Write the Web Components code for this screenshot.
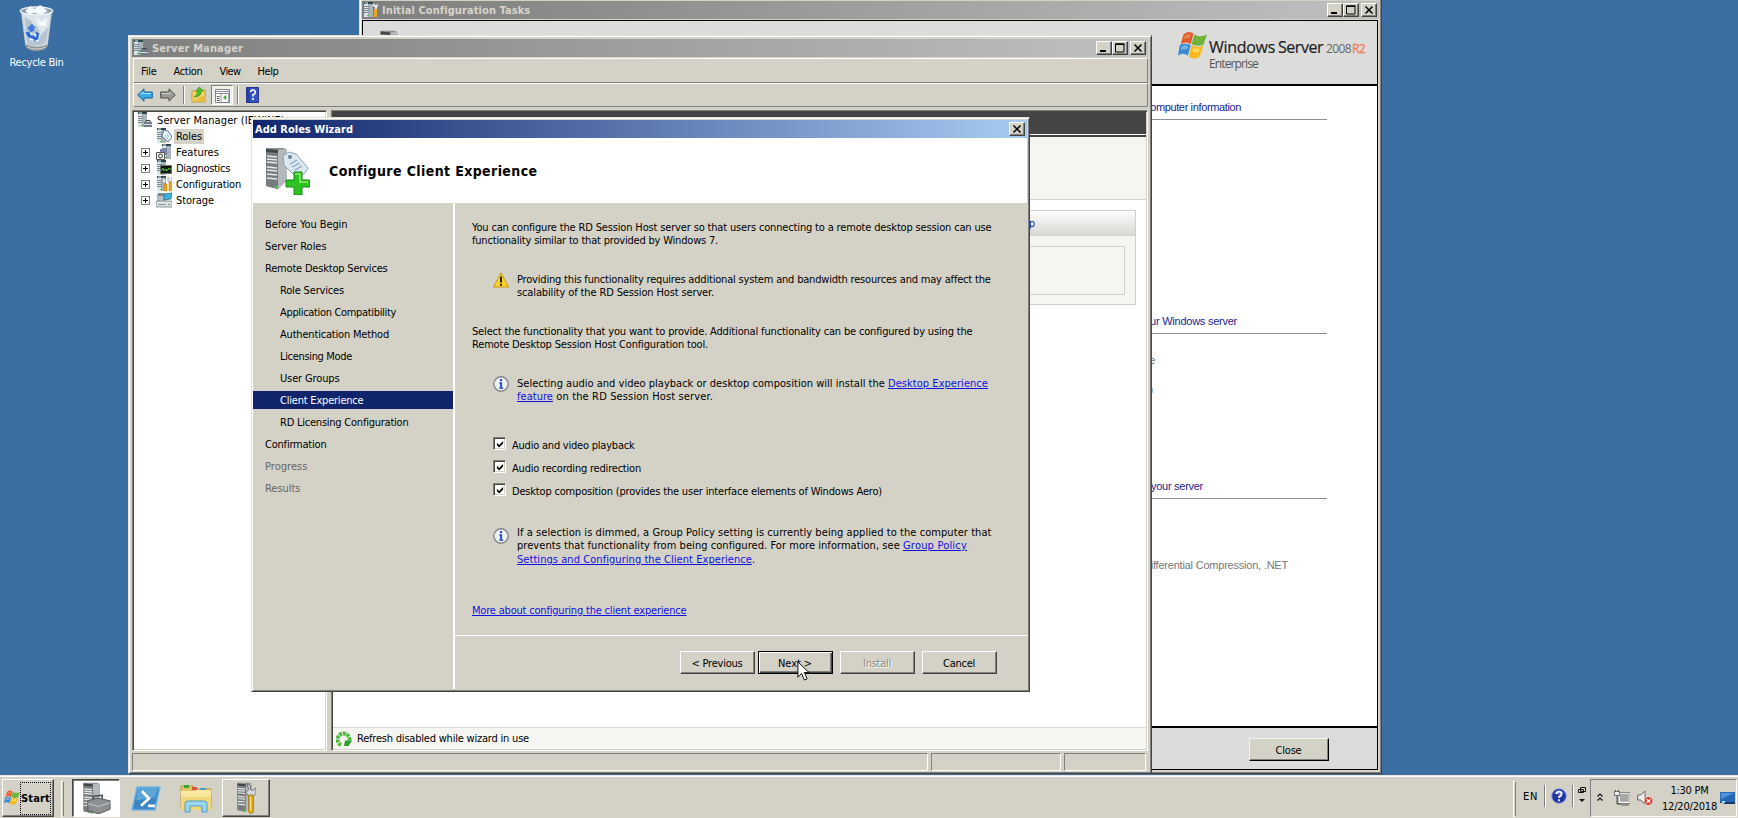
<!DOCTYPE html>
<html lang="en">
<head>
<meta charset="utf-8">
<title>Server Manager</title>
<style>
    html, body { margin: 0; height: 100%; overflow: hidden; }
    body {
        --face: #d4d2c7;
        --dark: #808080;
        --darker: #45453f;
        --navy: #10246b;
        --link: #1010e0;
        font: 11px/13px "DejaVu Sans Condensed", "DejaVu Sans", sans-serif;
        font-stretch: condensed;
        color: #000;
    }
</style>
</head>
<body>
<wd-desktop>
    <wd-shortcut slot="icons" icon="recycle"><wd-fit w="54">Recycle Bin</wd-fit></wd-shortcut>
    <wd-initial-tasks slot="windows"></wd-initial-tasks>
    <wd-server-manager slot="windows"></wd-server-manager>
    <wd-wizard slot="windows"></wd-wizard>
    <wd-taskbar slot="taskbar"></wd-taskbar>
</wd-desktop>

<script>
// ---- icons -------------------------------------------------------------

// small server tower, shared by most of the 16px icons
const tower = `
    <path d="M1 0h9v15H1z" fill="#a9b2ba"/><path d="M1 0h4v15H1z" fill="#d9e2e6"/>
    <path d="M1 0h9v2H1z" fill="#2c4650"/><path d="M2 1h3" stroke="#dff"/>
    <path d="M1 4.5h5M1 6.5h5M1 8.5h5M1 10.5h5" stroke="#7d8b93"/>
    <path d="M4 13h2v1H4z" fill="#3fbf2c"/>`;

const bigTower = `
    <path d="M2 1h18l3 2v30L14 42 2 39z" fill="#8b9093"/>
    <path d="M14 3l9-1v31l-9 9z" fill="#b4b8ba"/>
    <path d="M2 2l12 1v39L2 39z" fill="#777c80"/>
    <path d="M2 2l12 1v3L2 5z" fill="#40474a"/>
    <path d="M3 9l10 1M3 12l10 1M3 15l10 1M3 20l10 1M3 23l10 1M3 27l10 1M3 31l10 1" stroke="#e7eaeb" stroke-width="1.6"/>
    <path d="M11 39h3v2h-3z" fill="#35dc20"/>`;

const flag = `
    <path d="M6 4Q12-1 17 3L14 15Q9 11 3 15z" fill="#e2592b"/>
    <path d="M18 4Q24 8 32 4L28 16Q22 18 15 15z" fill="#70b53b"/>
    <path d="M2 16Q8 13 14 16L11 28Q5 24 0 28z" fill="#3b8ad0"/>
    <path d="M15 16Q21 20 28 17L24 29Q18 34 12 29z" fill="#f6b91d"/>
    <path d="M8 5Q12 2 14 4L13 8Q9 8 6 9z" fill="#f39561" opacity=".7"/>
    <path d="M4 18Q8 15 11 17L10 21Q6 20 3 22z" fill="#8fc9ee" opacity=".7"/>
    <path d="M17 19Q20 21 24 20L23 24Q19 25 16 23z" fill="#ffe77a" opacity=".7"/>`;

const ICONS = {
    recycle: ['0 0 40 48', `
        <path d="M3 6h34l-5 36q-12 6-24 0z" fill="#c3ced6"/>
        <path d="M5 9h30l-4 31q-11 5-22 0z" fill="#dbe4eb"/>
        <path d="M7 12l9 5-5 7 9-3 5 9 8-8-3 17q-10 5-20 1z" fill="#b7c4d1"/>
        <path d="M19 12l6 5 7-4-2 9-8-1zM11 26l5 4 9-1-3 8-9-1z" fill="#f4f8fb"/>
        <path d="M8 40q12 6 24 0v2q-3 5-12 5T8 42z" fill="#8f9596"/><path d="M10 43q10 4 20 0" stroke="#d8d8d2" fill="none"/>
        <ellipse cx="20" cy="6" rx="17.5" ry="4" fill="#8ea0ad" stroke="#eef2f4" stroke-width="1.5"/>
        <path d="M8 6l5-5 5 3 6-4 8 6-7 4-8-2-5 2z" fill="#f6f9fb"/>
        <path d="M10 24l5-5 4 4-2 1 1 2-5 2-1-3z" fill="#3f7ce0"/>
        <path d="M8 28l4-1 2 4 4 0-1 4-6-2zM19 27l4 2-1 6-5 2 0-4 3-1z" fill="#2f66d2"/>`],
    server: ['0 0 16 16', tower + `
        <path d="M7 10h8v5H7z" fill="#6f7d88"/><path d="M9 10V8.5h4V10" stroke="#38444c" fill="none"/><path d="M7 12.5h8" stroke="#d5dee4"/>`],
    tasks: ['0 0 16 16', tower + `
        <path d="M10 1v3l2 1v10h2V5l1-1V1l-1 2h-2z" fill="#efefe9"/><path d="M11 7h3v8h-3z" fill="#eba81b"/>`],
    roles: ['0 0 16 16', tower + `
        <path d="M8 2l4 1 4 6-4 5-6-6z" fill="#edf5fc" stroke="#557ea4"/><path d="M9 7l3 4M11 6l2 3" stroke="#91b0cb"/>`],
    features: ['0 0 16 16', `<g transform="translate(5 0)">${tower}</g>
        <path d="M4 5h7v5H4z" fill="#7c80b5"/><path d="M.5 8.5h8v7h-8z" fill="#f7f7f7" stroke="#555"/><circle cx="4.5" cy="12" r="2" fill="none" stroke="#333"/>`],
    diagnostics: ['0 0 16 16', tower + `
        <path d="M4.500 5.500h11v8h-11z" fill="#101810" stroke="#69716e"/><path d="M5 11l2-3 1 3 2-2 1 2 2-3 2 2" stroke="#55d32c" fill="none"/>`],
    configuration: ['0 0 16 16', tower + `
        <path d="M8 1l2 4-1 3-3-3zM12 1v4l2 1 2-2V1" fill="#e8e8e2" stroke="#77807f" stroke-width=".6"/>
        <path d="M8 8h3v7H8zM13 6h2.500v9H13z" fill="#eda51c" stroke="#ad7205" stroke-width=".5"/>`],
    storage: ['0 0 16 16', `
        <path d="M1 4h9v6H1z" fill="#b7bfc4"/><path d="M2 1h6l2 3H1z" fill="#7d8a92"/>
        <path d="M8 2l8-1-1 6-7 1z" fill="#3bb2df" stroke="#315d71" stroke-width=".7"/>
        <path d="M1 9h14l1 2v4H0v-4z" fill="#dde2e4" stroke="#767d80" stroke-width=".8"/><path d="M2 12.500h8" stroke="#8a9397"/><path d="M12 12h2v1h-2z" fill="#35b32b"/>`],
    back: ['0 0 16 14', `<path d="M.7 7L7 .8V4h8.300v6H7v3.200z" fill="#39aaea" stroke="#1d5f9c"/><path d="M3 6.500L6 4v1.500h8" stroke="#a8e2ff" fill="none"/>`],
    forward: ['0 0 16 14', `<path d="M15.300 7L9 .8V4H.7v6H9v3.200z" fill="#9b9b98" stroke="#4d4d4b"/><path d="M2 5.500h8V4" stroke="#d0d0cd" fill="none"/>`],
    folder: ['0 0 16 16', `<path d="M1 4h6l1-1h7v12H1z" fill="#f3d46b" stroke="#b48a1e" stroke-width=".7"/><path d="M2 14L15 8v6z" fill="#e9bd45"/><path d="M3 10q4-1 4-6H5l4-4 4 4h-2q0 6-8 6z" fill="#47c22a" stroke="#26871a" stroke-width=".6"/>`],
    panes: ['0 0 16 14', `<path d="M.5.500h15v13H.5z" fill="#fff" stroke="#7a7f88"/><path d="M1 2.500h14M1 4.500h14" stroke="#7f8695"/><path d="M2 7.500h3M2 9.500h3M2 11.500h3" stroke="#4b5563"/><path d="M6.500 5v8M14.500 5v8" stroke="#8d93a0"/><path d="M12 6v5L8.500 8.500z" fill="#33a62b"/>`],
    helpBook: ['0 0 14 16', `<path d="M.5.500h13v15H.5z" fill="#3454c4" stroke="#1d318c"/><path d="M1 1h3v14H1z" fill="#2741a5"/><path d="M5 5q0-2 2.500-2T10 5.200 7.500 8v1.500M7.500 11v2" stroke="#fff" stroke-width="1.7" fill="none"/>`],
    warning: ['0 0 16 16', `<path d="M8 .8L15.500 15H.5z" fill="#fad425" stroke="#c99a12" stroke-linejoin="round"/><path d="M8 4.500v6M8 11.800v2" stroke="#222" stroke-width="1.900"/>`],
    info: ['0 0 16 16', `<circle cx="8" cy="8" r="7.200" fill="#eef0f1" stroke="#85888c" stroke-width="1.400"/><path d="M8 3v2.200" stroke="#2856c4" stroke-width="2.200"/><path d="M6.300 7h1.700v5M6 12.200h4.300" stroke="#2856c4" stroke-width="1.300" fill="none"/><path d="M8.200 6.500v6" stroke="#2856c4" stroke-width="1.800"/>`],
    refresh: ['0 0 16 16', `<path d="M5 14A6 6 0 1 1 13 11" fill="none" stroke="#4fb944" stroke-width="4" stroke-dasharray="3 .8"/><path d="M9 9.500h7L12.500 15H8z" fill="#2e9e2c"/>`],
    addRole: ['0 0 46 48', bigTower + `
        <path d="M19 9l6-4 7 2 12 14-3 5-8 5L20 18z" fill="#dce8f0" stroke="#8ba3b6"/>
        <circle cx="26" cy="10" r="2" fill="#6d8193"/><path d="M26 17l7-4M28 20l8-4M31 23l7-4" stroke="#8aa4bd" stroke-width="1.300"/>
        <path d="M30 25h8v8h8v7h-8v8h-8v-8h-8v-7h8z" fill="#2fc321" stroke="#168a12"/><path d="M31 27h5v8h8" stroke="#90ee70" fill="none" stroke-width="1.500"/>`],
    serverBig: ['0 0 30 34', `<g transform="scale(.8)">${bigTower}</g>
        <path d="M6 20l10-3 13 3v9l-12 5-11-4z" fill="#8b8f92" stroke="#55595c"/><path d="M6 23l11 3 12-4" stroke="#c6cacc" fill="none"/>
        <path d="M12 18v-3l9-1v4" stroke="#444b50" stroke-width="1.500" fill="none"/>`],
    toolsBig: ['0 0 22 34', `<g transform="scale(.76)">${bigTower}</g>
        <path d="M12 2l4 2v4l3 1 3-3v6l-4 4h-4l-3-5 3-3z" fill="#d2d6d8" stroke="#62686b"/>
        <path d="M14 14h5v18q-3 3-5 0z" fill="#edb324" stroke="#9d7108"/><path d="M16 16v14" stroke="#ffe389"/>`],
    powershell: ['0 0 30 24', `<path d="M6 1h23L24 23H1z" fill="#3a86c4" stroke="#75b6e2" stroke-width="1.500" stroke-linejoin="round"/><path d="M7 2h20l-3 9L5 14z" fill="#6ab0de" opacity=".7"/><path d="M11 5l7 7-8 7M17 19h7" stroke="#fff" stroke-width="2.600" fill="none"/>`],
    explorer: ['0 0 32 30', `<path d="M1 3h12l2 3h16v20H1z" fill="#e3c46c" stroke="#c29b42"/><path d="M4 2h5v3H4z" fill="#39a832"/><path d="M12 4h5v3h-5z" fill="#d6533c"/><path d="M20 5h6v3h-6z" fill="#4b9bd0"/>
        <path d="M1 8h13l3-1h14v20H1z" fill="#fae69c"/><path d="M1 14h30v13H1z" fill="#f2d67c"/>
        <path d="M5 29v-8q0-3 3-3h16q3 0 3 3v8h-5v-6H10v6z" fill="#9cd7f0" stroke="#4d9cc4"/>`],
    flag: ['0 0 32 32', flag],
    helpRound: ['0 0 16 16', `<circle cx="8" cy="8" r="7.300" fill="#1d36a8" stroke="#8f9cc9"/><path d="M3 5q5-5 10 0-5 3-10 0z" fill="#6e88e0"/><path d="M5.500 6q0-2.500 2.500-2.500T10.500 6 8 8.500V10M8 11.300v2" stroke="#fff" stroke-width="1.700" fill="none"/>`],
    restore: ['0 0 10 18', `<path d="M3.500 1.500h5v4h-5zM1.500 3.500h5v3h-5z" fill="#d4d2c7" stroke="#111"/><path d="M2 13h6l-3 3z" fill="#111"/>`],
    chevrons: ['0 0 6 9', `<path d="M.5 3.500L3 1l2.500 2.500M.5 7.500L3 5l2.500 2.500" stroke="#111" fill="none" stroke-width="1.200"/>`],
    network: ['0 0 16 16', `<path d="M5 3h10.500v9.500H5z" fill="#a6a6a2" stroke="#fff" stroke-width="1.500"/><path d="M4 2.500h12v11H4z" fill="none" stroke="#555" stroke-width=".7"/><path d="M7 15h8" stroke="#555"/><path d="M3 5v9h4" fill="none" stroke="#444"/><path d="M.5 1.500h5v4h-5z" fill="#eee" stroke="#555" stroke-width=".8"/><path d="M1.500 0v2M4.500 0v2" stroke="#555"/>`],
    speaker: ['0 0 16 16', `<path d="M.7 5h3L8 1v13L3.700 10h-3z" fill="#eee" stroke="#666"/><circle cx="11.500" cy="11" r="4.300" fill="#dc3a2c" stroke="#f4dcd6" stroke-width=".7"/><path d="M9.700 9.200l3.600 3.600M13.300 9.200l-3.600 3.600" stroke="#fff" stroke-width="1.400"/>`],
    monitor: ['0 0 15 13', `<path d="M0 0h15v10H0z" fill="#2667b8"/><path d="M1 1h13L1 7z" fill="#4d96dc"/><path d="M0 10h15v2H4l-1-1H0z" fill="#173a6b"/><path d="M2 9h3v2H2z" fill="#9fd8f5"/>`],
    min: ['0 0 12 10', `<path d="M2 7h6v2H2z"/>`],
    max: ['0 0 12 10', `<path d="M1.500 1h8.500v8H1.500z" fill="none" stroke="#000"/><path d="M1 .5h9.500v1.500H1z"/>`],
    close: ['0 0 12 10', `<path d="M2.500 1.500l7 7M9.500 1.500l-7 7" stroke="#000" stroke-width="1.500"/>`],
    pointer: ['0 0 13 22', `<path d="M1 1v16l4-4 3 7 3-1.300L8 12h5z" fill="#fff" stroke="#000" stroke-linejoin="round"/>`],
    check: ['0 0 9 9', `<path d="M1 3v3l2.500 2.500L8 4V1L3.500 5.500z"/>`]
};

customElements.define('wd-icon', class extends HTMLElement {
    constructor() {
        super();
        const shadowRoot = this.attachShadow({mode: 'open'});
        const [box, body] = ICONS[this.getAttribute('name')];
        const w = this.getAttribute('w') || 16;
        const h = this.getAttribute('h') || 16;
        shadowRoot.innerHTML = `
        <style>
            :host { display: block; flex: none; width: ${w}px; height: ${h}px; }
            svg { display: block; width: 100%; height: 100%; }
        </style>
        <svg viewBox="${box}" preserveAspectRatio="none">${body}</svg>`;
    }
});

// ---- basic controls ----------------------------------------------------

customElements.define('wd-desktop', class extends HTMLElement {
    constructor() {
        super();
        this.attachShadow({mode: 'open'}).innerHTML = `
        <style>
            :host { display: flex; flex-direction: column; position: relative; height: 100vh; background: #3b6fa4; overflow: hidden; }
            .space { flex: 1; padding: 5px 0 0 8px; }
        </style>
        <div class="space"><slot name="icons"></slot></div>
        <slot name="windows"></slot>
        <slot name="taskbar"></slot>`;
    }
});

customElements.define('wd-shortcut', class extends HTMLElement {
    constructor() {
        super();
        this.attachShadow({mode: 'open'}).innerHTML = `
        <style>
            :host { display: flex; flex-direction: column; align-items: center; gap: 4px; width: 57px; color: #fff; }
        </style>
        <wd-icon name="${this.getAttribute('icon')}" w="37" h="47"></wd-icon>
        <slot></slot>`;
    }
});

customElements.define('wd-caption-button', class extends HTMLElement {
    constructor() {
        super();
        this.attachShadow({mode: 'open'}).innerHTML = `
        <style>
            :host {
                display: flex; justify-content: center; align-items: center; box-sizing: border-box;
                width: 16px; height: 14px; background: var(--face);
                border: 1px solid; border-color: #fff var(--darker) var(--darker) #fff;
                box-shadow: inset -1px -1px var(--dark);
            }
        </style>
        <wd-icon name="${this.getAttribute('icon')}" w="12" h="10"></wd-icon>`;
    }
});

// window frame with a title bar
customElements.define('wd-window', class extends HTMLElement {
    constructor() {
        super();
        const icon = this.getAttribute('icon');
        const buttons = this.hasAttribute('dialog') ? ['close'] : ['min', 'max', 'close'];
        this.attachShadow({mode: 'open'}).innerHTML = `
        <style>
            :host {
                display: flex; flex-direction: column; box-sizing: border-box; height: 100%;
                padding: 2px; background: var(--face);
                border: 1px solid; border-color: #e4e2da var(--darker) var(--darker) #e4e2da;
                box-shadow: inset 1px 1px #fff, inset -1px -1px var(--dark);
            }
            .bar {
                display: flex; align-items: center; flex: none; height: 18px; padding: 0 2px 0 1px;
                background: linear-gradient(90deg, #7f7f7f, #8e8e8c 25%, #c0c0c0);
                color: #d6d4ca; font-weight: bold;
            }
            :host([dialog]) { padding: 2px 2px 2px 1px; }
            :host([dialog]) .bar { padding-left: 2px; background: linear-gradient(90deg, #10256c, #a8ccf2); color: #fff; }
            .bar wd-icon { margin-right: 3px; }
            .title { flex: 1; }
            wd-caption-button:last-child { margin-left: 2px; }
            .body { flex: 1; min-height: 0; display: flex; flex-direction: column; }
        </style>
        <div class="bar">
            ${icon ? `<wd-icon name="${icon}"></wd-icon>` : ''}
            <span class="title"><slot name="title"></slot></span>
            ${buttons.map(b => `<wd-caption-button icon="${b}"></wd-caption-button>`).join('')}
        </div>
        <div class="body"><slot></slot></div>`;
    }
});

customElements.define('wd-button', class extends HTMLElement {
    constructor() {
        super();
        this.attachShadow({mode: 'open'}).innerHTML = `
        <style>
            :host {
                display: flex; align-items: center; justify-content: center; box-sizing: border-box;
                width: 75px; height: 23px; padding: 2px 1px 0 0; background: var(--face);
                border: 1px solid; border-color: #fff var(--darker) var(--darker) #fff;
                box-shadow: inset -1px -1px var(--dark);
            }
            :host([default]) { border-color: #000; box-shadow: inset 1px 1px #fff, inset -1px -1px var(--darker), inset -2px -2px var(--dark); }
            :host([disabled]) { color: #8b8b86; text-shadow: 1px 1px #fff; }
            :host([large]) { width: 80px; border-color: #f4f4ee #000 #000 #f4f4ee; }
        </style>
        <slot></slot>`;
    }
});

customElements.define('wd-check', class extends HTMLElement {
    constructor() {
        super();
        this.attachShadow({mode: 'open'}).innerHTML = `
        <style>
            :host { display: flex; gap: 6px; height: 13px; }
            .box {
                display: flex; align-items: center; justify-content: center; box-sizing: border-box;
                width: 13px; height: 13px; margin-top: -2px; background: #fff;
                border: 1px solid; border-color: var(--dark) #fff #fff var(--dark);
                box-shadow: inset 1px 1px var(--darker), inset -1px -1px var(--face);
            }
        </style>
        <span class="box"><wd-icon name="check" w="8" h="8"></wd-icon></span>
        <slot></slot>`;
    }
});

// paragraph led by an icon
customElements.define('wd-note', class extends HTMLElement {
    constructor() {
        super();
        this.attachShadow({mode: 'open'}).innerHTML = `
        <style>
            :host { display: flex; gap: 8px; padding-left: 21px; }
            wd-icon { margin: -1px 0 -2px; }
            :host([low]) wd-icon { margin-top: 2px; }
        </style>
        <wd-icon name="${this.getAttribute('icon')}"></wd-icon>
        <div><slot></slot></div>`;
    }
});

// ---- Initial Configuration Tasks ---------------------------------------

customElements.define('wd-initial-tasks', class extends HTMLElement {
    constructor() {
        super();
        this.attachShadow({mode: 'open'}).innerHTML = `
        <style>
            :host { display: block; position: absolute; left: 359px; top: -2px; width: 1023px; height: 776px; }
            .page { flex: 1; margin: 1px 1px 1px 0; display: flex; flex-direction: column; border: 1px solid #000; background: #fff; }
            header { display: flex; justify-content: space-between; align-items: flex-start; box-sizing: border-box; height: 65px; padding: 9px 12px 0 16px; background: #dcdcdb; border-bottom: 2px solid #000; }
            .logo { display: flex; gap: 2px; font-family: "Open Sans", sans-serif; font-stretch: normal; }
            .logo wd-icon { margin-top: 1px; }
            .name { display: flex; align-items: baseline; font-size: 16px; line-height: 18px; padding-top: 8px; color: #222; -webkit-text-stroke: .2px #222; }
            .name .year { font-size: 12px; margin-left: 3px; color: #666; -webkit-text-stroke: 0; }
            .name .r2 { font-size: 12px; margin-left: 1px; color: #ee7f5c; -webkit-text-stroke: .4px #ee7f5c; }
            .edition { font-size: 12px; line-height: 13px; margin-top: -1px; color: #555; }
            main { flex: 1; display: flex; flex-direction: column; align-items: flex-end; padding: 15px 50px 0 0; font: 11px/13px "Liberation Sans", Arial, sans-serif; font-stretch: normal; }
            h2 { margin: 0; box-sizing: border-box; width: 190px; height: 19px; border-bottom: 1px solid #8e8e8e; font: inherit; color: #1c1c96; display: flex; }
            p { margin: 0; box-sizing: border-box; width: 190px; color: #777; display: flex; }
            footer { display: flex; justify-content: flex-end; align-items: flex-start; box-sizing: border-box; height: 43px; padding: 10px 48px 0 0; background: #dbdbdb; border-top: 2px solid #000; }
        </style>
        <wd-window icon="tasks">
            <wd-fit slot="title" w="148">Initial Configuration Tasks</wd-fit>
            <div class="page">
                <header>
                    <wd-icon name="serverBig" w="30" h="34"></wd-icon>
                    <div class="logo">
                        <wd-icon name="flag" w="29" h="28"></wd-icon>
                        <div>
                            <div class="name"><wd-fit w="66">Windows</wd-fit><wd-fit w="45" style="margin-left:3px">Server</wd-fit><wd-fit class="year" w="25">2008</wd-fit><wd-fit class="r2" w="13">R2</wd-fit></div>
                            <div class="edition"><wd-fit w="49">Enterprise</wd-fit></div>
                        </div>
                    </div>
                </header>
                <main>
                    <h2><wd-fit w="96" style="margin-left:8px">computer information</wd-fit></h2>
                    <p style="height:195px"></p>
                    <h2><wd-fit w="98" style="margin-left:2px">your Windows server</wd-fit></h2>
                    <p style="margin-top:20px;padding-left:3px">the</p>
                    <p style="margin-top:16px;padding-left:4px">on</p>
                    <p style="height:84px"></p>
                    <h2><wd-fit w="52" style="margin-left:14px">your server</wd-fit></h2>
                    <p style="margin-top:60px"><wd-fit w="145" style="margin-left:6px">Differential Compression, .NET</wd-fit></p>
                </main>
                <footer><wd-button large><wd-fit w="26">Close</wd-fit></wd-button></footer>
            </div>
        </wd-window>`;
    }
});

// ---- Server Manager ----------------------------------------------------

customElements.define('wd-tree-item', class extends HTMLElement {
    constructor() {
        super();
        const plus = this.hasAttribute('plus') ? '<i></i>' : '';
        this.attachShadow({mode: 'open'}).innerHTML = `
        <style>
            :host { display: flex; align-items: center; height: 16px; padding-left: 7px; }
            :host([root]) { padding-left: 3px; }
            :host([root]) .toggle { display: none; }
            .toggle { width: 15px; height: 9px; }
            i { display: block; box-sizing: border-box; width: 9px; height: 9px; border: 1px solid #808080;
                background: linear-gradient(#000, #000) center / 5px 1px no-repeat, linear-gradient(#000, #000) center / 1px 5px no-repeat, #fff; }
            .label { padding: 1px 2px; margin-left: 2px; }
            :host([selected]) .label { background: #d4d2c7; }
        </style>
        <span class="toggle">${plus}</span>
        <wd-icon name="${this.getAttribute('icon')}"></wd-icon>
        <span class="label"><slot></slot></span>`;
    }
});

customElements.define('wd-server-manager', class extends HTMLElement {
    constructor() {
        super();
        this.attachShadow({mode: 'open'}).innerHTML = `
        <style>
            :host { display: block; position: absolute; left: 128px; top: 35px; width: 1024px; height: 739px; }
            wd-window { padding: 3px 3px 2px; }
            .strip { box-sizing: border-box; flex: none; display: flex; align-items: center; height: 24px; margin-left: 1px; border: 1px solid; border-color: #fff var(--dark) var(--dark) #fff; }
            .menu { margin-top: 1px; height: 25px; padding: 1px 0 0 7px; gap: 17px; }
            .tools { padding-left: 3px; }
            .sep { width: 1px; height: 18px; background: var(--dark); border-right: 1px solid #fff; }
            .pressed { box-sizing: border-box; width: 22px; height: 20px; padding: 3px 2px 0 3px; margin: 0 4px 0 3px; background: #f0efea; border: 1px solid; border-color: var(--dark) #fff #fff var(--dark); }
            .panes { flex: 1; min-height: 0; display: flex; gap: 4px; margin-top: 3px; }
            .sunken { box-sizing: border-box; border: 1px solid; border-color: var(--dark) #fff #fff var(--dark); box-shadow: inset 1px 1px var(--darker), inset -1px -1px var(--face); background: #fff; }
            .tree { width: 195px; padding: 1px; overflow: hidden; }
            .detail { flex: 1; display: flex; flex-direction: column; padding: 1px; }
            .dark { height: 22px; background: #444; border-bottom: 1px solid #fff; }
            .summary { height: 62px; background: #f5f5f2; border-top: 2px solid #444; border-bottom: 1px solid #d0d0ce; }
            .scroll { flex: 1; padding: 10px 10px 0 22px; }
            .card { border: 1px solid #cfcfcc; background: #f5f5f2; }
            .card header { display: flex; justify-content: flex-end; align-items: center; box-sizing: border-box; height: 25px; padding-right: 100px; background: linear-gradient(#fdfdfc, #d9d9d5); border-bottom: 1px solid #d0d0ce; color: #1010b0; }
            .card div { height: 47px; margin: 10px 10px 9px; border: 1px solid #cfcfcc; }
            .refresh { display: flex; align-items: center; gap: 5px; height: 21px; padding-left: 3px; background: #f5f5f2; border-top: 1px solid #d8d8dc; }
            .status { display: grid; grid-template-columns: 796px 130px 1fr; gap: 3px; height: 18px; margin: 2px 2px 0 0; }
            .status span { box-sizing: border-box; border: 1px solid; border-color: var(--dark) #fff #fff var(--dark); }
        </style>
        <wd-window icon="server">
            <wd-fit slot="title" w="91">Server Manager</wd-fit>
            <nav class="strip menu"><wd-fit w="15.500">File</wd-fit><wd-fit w="29">Action</wd-fit><wd-fit w="21">View</wd-fit><wd-fit w="21">Help</wd-fit></nav>
            <div class="strip tools">
                <wd-icon name="back" h="14"></wd-icon>
                <wd-icon name="forward" h="14" style="margin:0 7px"></wd-icon>
                <span class="sep"></span>
                <wd-icon name="folder" w="15" style="margin:0 2px 0 6px"></wd-icon>
                <span class="pressed"><wd-icon name="panes" h="14" w="15"></wd-icon></span>
                <span class="sep"></span>
                <wd-icon name="helpBook" w="13" style="margin-left:7px"></wd-icon>
            </div>
            <div class="panes">
                <div class="sunken tree">
                    <wd-tree-item root icon="server"><wd-fit w="128">Server Manager (IEWIN7)</wd-fit></wd-tree-item>
                    <wd-tree-item selected icon="roles"><wd-fit w="26">Roles</wd-fit></wd-tree-item>
                    <wd-tree-item plus icon="features"><wd-fit w="43">Features</wd-fit></wd-tree-item>
                    <wd-tree-item plus icon="diagnostics"><wd-fit w="54">Diagnostics</wd-fit></wd-tree-item>
                    <wd-tree-item plus icon="configuration"><wd-fit w="65">Configuration</wd-fit></wd-tree-item>
                    <wd-tree-item plus icon="storage"><wd-fit w="38">Storage</wd-fit></wd-tree-item>
                </div>
                <div class="sunken detail">
                    <div class="dark"></div>
                    <div class="summary"></div>
                    <div class="scroll">
                        <div class="card"><header>Help</header><div></div></div>
                    </div>
                    <div class="refresh"><wd-icon name="refresh"></wd-icon><wd-fit w="172">Refresh disabled while wizard in use</wd-fit></div>
                </div>
            </div>
            <div class="status"><span></span><span></span><span></span></div>
        </wd-window>`;
    }
});

// ---- Add Roles Wizard --------------------------------------------------

const STEPS = [
    ['Before You Begin', 82.5], ['Server Roles', 61.5], ['Remote Desktop Services', 122.5],
    ['Role Services', 64, 'sub'], ['Application Compatibility', 116, 'sub'], ['Authentication Method', 109, 'sub'],
    ['Licensing Mode', 72, 'sub'], ['User Groups', 59.5, 'sub'], ['Client Experience', 83.5, 'sub on'],
    ['RD Licensing Configuration', 128.5, 'sub'], ['Confirmation', 61.5], ['Progress', 42.5, 'off'], ['Results', 35.5, 'off']
];

customElements.define('wd-steps', class extends HTMLElement {
    constructor() {
        super();
        this.attachShadow({mode: 'open'}).innerHTML = `
        <style>
            :host { display: flex; flex-direction: column; gap: 4px; box-sizing: border-box; width: 202px; padding-top: 12px; border-right: 2px solid #fff; }
            div { height: 18px; line-height: 20px; padding-left: 12px; }
            .sub { padding-left: 27px; }
            .on { background: var(--navy); color: #fff; }
            .off { color: #66665f; }
        </style>
        ${STEPS.map(([t, w, c]) => `<div class="${c || ''}"><wd-fit w="${w}">${t}</wd-fit></div>`).join('')}`;
    }
});

customElements.define('wd-wizard', class extends HTMLElement {
    constructor() {
        super();
        this.attachShadow({mode: 'open'}).innerHTML = `
        <style>
            :host { display: block; position: absolute; left: 251px; top: 117px; width: 779px; height: 575px; }
            .head { box-sizing: border-box; flex: none; display: flex; align-items: center; gap: 19px; height: 65px; padding: 1px 0 0 11px; background: #fff; font-size: 14px; line-height: 18px; font-weight: bold; }
            .cols { flex: 1; display: flex; }
            .right { flex: 1; display: flex; flex-direction: column; }
            .content { box-sizing: border-box; height: 433px; padding: 18px 0 0 17px; border-bottom: 1px solid #fff; }
            .content > * { margin-bottom: 26px; }
            .line { display: flex; white-space: pre; }
            .checks { display: flex; flex-direction: column; gap: 10px; margin: 36px 0 28px; padding-left: 21px; }
            .last { margin-top: 1px; }
            a { color: var(--link); text-decoration: underline; }
            .more { margin-top: 38px; }
            .buttons { position: relative; display: flex; padding: 15px 0 0 225px; }
            .pointer { position: absolute; left: 342px; top: 25px; }
        </style>
        <wd-window dialog>
            <wd-fit slot="title" w="98">Add Roles Wizard</wd-fit>
            <div class="head">
                <wd-icon name="addRole" w="46" h="48"></wd-icon>
                <wd-fit w="208">Configure Client Experience</wd-fit>
            </div>
            <div class="cols">
                <wd-steps></wd-steps>
                <div class="right">
                    <div class="content">
                        <div>
                            <div class="line"><wd-fit w="519.500">You can configure the RD Session Host server so that users connecting to a remote desktop session can use</wd-fit></div>
                            <div class="line"><wd-fit w="246">functionality similar to that provided by Windows 7.</wd-fit></div>
                        </div>
                        <wd-note icon="warning">
                            <div class="line"><wd-fit w="473.500">Providing this functionality requires additional system and bandwidth resources and may affect the</wd-fit></div>
                            <div class="line"><wd-fit w="197">scalability of the RD Session Host server.</wd-fit></div>
                        </wd-note>
                        <div>
                            <div class="line"><wd-fit w="500.500">Select the functionality that you want to provide. Additional functionality can be configured by using the</wd-fit></div>
                            <div class="line"><wd-fit w="236">Remote Desktop Session Host Configuration tool.</wd-fit></div>
                        </div>
                        <wd-note icon="info">
                            <div class="line"><wd-fit w="371">Selecting audio and video playback or desktop composition will install the </wd-fit><a><wd-fit w="100">Desktop Experience</wd-fit></a></div>
                            <div class="line"><a><wd-fit w="36">feature</wd-fit></a><wd-fit w="160"> on the RD Session Host server.</wd-fit></div>
                        </wd-note>
                        <div class="checks">
                            <wd-check><wd-fit w="122.500">Audio and video playback</wd-fit></wd-check>
                            <wd-check><wd-fit w="129">Audio recording redirection</wd-fit></wd-check>
                            <wd-check><wd-fit w="370">Desktop composition (provides the user interface elements of Windows Aero)</wd-fit></wd-check>
                        </div>
                        <wd-note icon="info" low>
                            <div class="line"><wd-fit w="474.500">If a selection is dimmed, a Group Policy setting is currently being applied to the computer that</wd-fit></div>
                            <div class="line"><wd-fit w="386">prevents that functionality from being configured. For more information, see </wd-fit><a><wd-fit w="64">Group Policy</wd-fit></a></div>
                            <div class="line last"><a><wd-fit w="235">Settings and Configuring the Client Experience</wd-fit></a>.</div>
                        </wd-note>
                        <div class="line more"><a><wd-fit w="214.500">More about configuring the client experience</wd-fit></a></div>
                    </div>
                    <div class="buttons">
                        <wd-button><wd-fit w="51">&lt; Previous</wd-fit></wd-button>
                        <wd-button default style="margin:0 7px 0 3px"><wd-fit w="34">Next &gt;</wd-fit></wd-button>
                        <wd-button disabled><wd-fit w="28">Install</wd-fit></wd-button>
                        <wd-button style="margin-left:7px"><wd-fit w="32">Cancel</wd-fit></wd-button>
                        <wd-icon class="pointer" name="pointer" w="12" h="21"></wd-icon>
                    </div>
                </div>
            </div>
        </wd-window>`;
    }
});

// ---- taskbar -----------------------------------------------------------

customElements.define('wd-taskbar', class extends HTMLElement {
    constructor() {
        super();
        this.attachShadow({mode: 'open'}).innerHTML = `
        <style>
            :host { display: flex; flex: none; align-items: flex-start; box-sizing: border-box; height: 43px; padding: 3px 1px 0 2px; background: var(--face); border-top: 1px solid #e8e6df; box-shadow: inset 0 1px #fff; position: relative; }
            .btn { display: flex; align-items: center; justify-content: center; box-sizing: border-box; width: 48px; height: 38px; border: 1px solid; border-color: #fff var(--darker) var(--darker) #fff; box-shadow: inset -1px -1px var(--dark); }
            .start { width: 52px; padding-right: 1px; font-weight: bold; }
            .start wd-icon { margin-top: -2px; }
            .start span { display: flex; align-items: center; height: 31px; border: 1px dotted #000; }
            .grip { width: 1px; height: 34px; margin-top: 2px; border: 1px solid; border-color: #fff var(--dark) #fff #fff; }
            .active { background: #fff; border-color: var(--darker) #fff #fff var(--darker); box-shadow: inset 1px 1px var(--dark); }
            .flat { height: 38px; display: flex; align-items: center; }
            .fill { flex: 1; }
            .line { width: 1px; height: 22px; margin-top: 6px; background: var(--dark); border-right: 1px solid #fff; }
            .tray { display: flex; align-items: center; box-sizing: border-box; width: 147px; height: 38px; padding-left: 6px; border: 1px solid; border-color: var(--dark) #fff #fff var(--dark); }
            .clock { display: flex; flex-direction: column; align-items: center; gap: 3px; margin: 0 3px 0 9px; }
        </style>
        <div class="btn start"><wd-icon name="flag" w="16" h="15"></wd-icon><span><wd-fit w="29">Start</wd-fit></span></div>
        <span class="grip" style="margin-left:7px"></span>
        <div class="btn active" style="margin-left:8px"><wd-icon name="serverBig" w="29" h="32"></wd-icon></div>
        <div class="flat" style="margin-left:11px"><wd-icon name="powershell" w="30" h="25"></wd-icon></div>
        <div class="flat" style="margin-left:19px"><wd-icon name="explorer" w="32" h="30"></wd-icon></div>
        <div class="btn" style="margin-left:10px"><wd-icon name="toolsBig" w="20" h="32"></wd-icon></div>
        <span class="fill"></span>
        <span class="grip"></span>
        <div class="flat" style="margin:-2px 6px 0 7px;"><wd-fit w="15">EN</wd-fit></div>
        <span class="line"></span>
        <div class="flat" style="margin:-2px 5px 0 5px"><wd-icon name="helpRound"></wd-icon></div>
        <span class="line"></span>
        <wd-icon name="restore" w="10" h="18" style="margin:7px 3px 0 3px"></wd-icon>
        <div class="tray">
            <wd-icon name="chevrons" w="6" h="9" style="margin-top:-2px"></wd-icon>
            <wd-icon name="network" style="margin:0 7px 0 11px"></wd-icon>
            <wd-icon name="speaker"></wd-icon>
            <div class="clock"><wd-fit w="38">1:30 PM</wd-fit><wd-fit w="55">12/20/2018</wd-fit></div>
            <wd-icon name="monitor" w="15" h="13"></wd-icon>
        </div>`;
    }
});

// spreads its text over exactly w pixels; defined last so the inherited font is already in place
customElements.define('wd-fit', class extends HTMLElement {
    constructor() {
        super();
        this.attachShadow({mode: 'open'}).innerHTML = `
        <style>
            :host { display: inline-block; white-space: nowrap; }
            span { white-space: pre; }
        </style>
        <span><slot></slot></span>`;
    }
    connectedCallback() {
        const span = this.shadowRoot.querySelector('span');
        const w = parseFloat(this.getAttribute('w'));
        this.style.letterSpacing = '0px';
        const natural = span.getBoundingClientRect().width;
        this.style.letterSpacing = (w - natural) / this.textContent.length + 'px';
        this.style.width = w + 'px';
        // underlines do not cross an inline-block, so links carry their own
        if (this.parentElement && this.parentElement.localName === 'a') span.style.textDecoration = 'underline';
    }
});
</script>
</body>
</html>
